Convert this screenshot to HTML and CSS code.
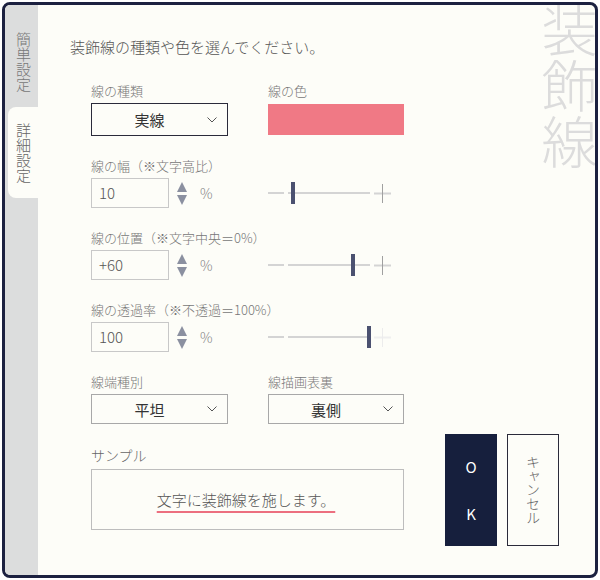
FILE: index.html
```html
<!DOCTYPE html>
<html lang="ja">
<head>
<meta charset="utf-8">
<title>装飾線</title>
<link rel="stylesheet" href="styles.css">
</head>
<body>
<div class="frame">
  <nav class="tabs">
    <div class="tab">簡単設定</div>
    <div class="tab active">詳細設定</div>
  </nav>
  <main class="panel">
    <div class="watermark">装飾線</div>
    <p class="lead">装飾線の種類や色を選んでください。</p>
    <div class="bottom">
      <div class="form">
        <div class="grid2">
          <div class="field">
            <div class="label">線の種類</div>
            <div class="select focus"><span class="val">実線</span><svg class="chev" width="10" height="6" viewBox="0 0 10 6"><polyline points="0.5,0.5 5,5 9.5,0.5" fill="none" stroke="#555" stroke-width="1"/></svg></div>
          </div>
          <div class="field">
            <div class="label">線の色</div>
            <div class="swatch"></div>
          </div>
        </div>

        <div class="field">
          <div class="label">線の幅（※文字高比）</div>
          <div class="grid2 mid">
            <div class="num">
              <div class="input">10</div>
              <svg class="spin" width="10" height="23" viewBox="0 0 10 23"><polygon points="5,0 10,10 0,10" fill="#8b90a0"/><polygon points="0,13 10,13 5,23" fill="#8b90a0"/></svg>
              <span class="unit">%</span>
            </div>
            <div class="slider">
              <span class="minus"></span>
              <span class="track"><span class="thumb" style="left:3px"></span></span>
              <svg class="plus" width="17" height="19" viewBox="0 0 17 19"><line x1="0" y1="9.5" x2="17" y2="9.5" stroke="#d4d4d4" stroke-width="2"/><line x1="8.5" y1="0" x2="8.5" y2="19" stroke="#a0a0a0" stroke-width="1"/></svg>
            </div>
          </div>
        </div>

        <div class="field">
          <div class="label">線の位置（※文字中央＝0%）</div>
          <div class="grid2 mid">
            <div class="num">
              <div class="input">+60</div>
              <svg class="spin" width="10" height="23" viewBox="0 0 10 23"><polygon points="5,0 10,10 0,10" fill="#8b90a0"/><polygon points="0,13 10,13 5,23" fill="#8b90a0"/></svg>
              <span class="unit">%</span>
            </div>
            <div class="slider">
              <span class="minus"></span>
              <span class="track"><span class="thumb" style="left:63px"></span></span>
              <svg class="plus" width="17" height="19" viewBox="0 0 17 19"><line x1="0" y1="9.5" x2="17" y2="9.5" stroke="#d4d4d4" stroke-width="2"/><line x1="8.5" y1="0" x2="8.5" y2="19" stroke="#a0a0a0" stroke-width="1"/></svg>
            </div>
          </div>
        </div>

        <div class="field">
          <div class="label">線の透過率（※不透過＝100%）</div>
          <div class="grid2 mid">
            <div class="num">
              <div class="input">100</div>
              <svg class="spin" width="10" height="23" viewBox="0 0 10 23"><polygon points="5,0 10,10 0,10" fill="#8b90a0"/><polygon points="0,13 10,13 5,23" fill="#8b90a0"/></svg>
              <span class="unit">%</span>
            </div>
            <div class="slider">
              <span class="minus"></span>
              <span class="track"><span class="thumb" style="left:79px"></span></span>
              <svg class="plus" width="17" height="19" viewBox="0 0 17 19"><line x1="0" y1="9.5" x2="17" y2="9.5" stroke="#efefef" stroke-width="2"/><line x1="8.5" y1="0" x2="8.5" y2="19" stroke="#ececec" stroke-width="1"/></svg>
            </div>
          </div>
        </div>

        <div class="grid2">
          <div class="field">
            <div class="label">線端種別</div>
            <div class="select"><span class="val">平坦</span><svg class="chev" width="10" height="6" viewBox="0 0 10 6"><polyline points="0.5,0.5 5,5 9.5,0.5" fill="none" stroke="#555" stroke-width="1"/></svg></div>
          </div>
          <div class="field">
            <div class="label">線描画表裏</div>
            <div class="select"><span class="val">裏側</span><svg class="chev" width="10" height="6" viewBox="0 0 10 6"><polyline points="0.5,0.5 5,5 9.5,0.5" fill="none" stroke="#555" stroke-width="1"/></svg></div>
          </div>
        </div>

        <div class="field">
          <div class="label sample-label">サンプル</div>
          <div class="sample"><span class="sample-text">文字に装飾線を施します。</span></div>
        </div>
      </div>

      <div class="buttons">
        <button class="btn ok"><span>O</span><span>K</span></button>
        <button class="btn cancel"><span class="vtext">キャンセル</span></button>
      </div>
    </div>
  </main>
</div>
</body>
</html>
```

FILE: styles.css
```css
* { box-sizing: border-box; }

html, body {
  margin: 0;
  padding: 0;
  background: #ffffff;
  font-family: "Noto Sans CJK JP", "Noto Sans", sans-serif;
  font-weight: 300;
}

.frame {
  margin: 2px;
  width: 596px;
  height: 576px;
  border: 3px solid #1c2140;
  border-radius: 8px;
  display: flex;
  overflow: hidden;
  background: #fdfdf8;
}

.tabs {
  width: 33px;
  flex: none;
  background: #dcdddd;
  padding-top: 16px;
  display: flex;
  flex-direction: column;
  gap: 4px;
}

.tab {
  margin-left: 3px;
  writing-mode: vertical-rl;
  font-size: 15px;
  line-height: 30px;
  color: #777;
  padding: 11px 0 11px;
  border-radius: 8px 0 0 8px;
  text-align: left;
}

.tab.active {
  background: #fdfdf8;
  padding: 16px 0 15px;
  color: #666;
}

.panel {
  flex: 1;
  position: relative;
  padding: 32px 0 30px 32px;
  display: flex;
  flex-direction: column;
}

.watermark {
  position: absolute;
  top: -3px;
  right: -2px;
  writing-mode: vertical-rl;
  font-size: 56px;
  line-height: 56px;
  color: #dcdcdc;
  font-weight: 300;
}

.lead {
  margin: 0;
  font-size: 15px;
  line-height: 20px;
  color: #555;
  position: relative;
}

.bottom {
  margin-top: 25px;
  display: flex;
  align-items: flex-end;
}

.form {
  margin-left: 21px;
  width: 313px;
  display: flex;
  flex-direction: column;
  gap: 21px;
  margin-bottom: 16px;
}

.grid2 {
  display: grid;
  grid-template-columns: 137px 136px;
  column-gap: 40px;
}

.grid2.mid {
  align-items: center;
}

.field {
  display: flex;
  flex-direction: column;
}

.label {
  font-size: 13px;
  line-height: 18px;
  color: #777;
  margin-bottom: 3px;
  white-space: nowrap;
}

.sample-label {
  font-size: 14px;
  line-height: 20px;
  margin-bottom: 4px;
  color: #666;
}

.select {
  height: 30px;
  border: 1px solid #a8a8a8;
  background: #fdfdf8;
  display: flex;
  align-items: center;
  padding-right: 10px;
}

.select.focus {
  height: 33px;
  border-color: #2a2a3a;
}

.select .val {
  flex: 1;
  text-align: center;
  font-size: 15px;
  color: #333;
  font-weight: 400;
}

.chev {
  flex: none;
  display: block;
}

.swatch {
  height: 31px;
  margin-top: 1px;
  background: #f07985;
}

.num {
  display: flex;
  align-items: center;
}

.input {
  width: 78px;
  height: 30px;
  border: 1px solid #c8c8c8;
  background: #fdfdf8;
  font-size: 15px;
  line-height: 28px;
  padding-left: 7px;
  color: #555;
}

.spin {
  margin-left: 8px;
  display: block;
  flex: none;
}

.unit {
  margin-left: 13px;
  font-size: 14px;
  color: #888;
}

.slider {
  display: flex;
  align-items: center;
  gap: 4px;
  height: 30px;
}

.minus {
  width: 16px;
  height: 2px;
  background: #d4d4d4;
}

.track {
  width: 82px;
  height: 2px;
  background: #d4d4d4;
  position: relative;
}

.thumb {
  position: absolute;
  top: -10px;
  width: 4px;
  height: 22px;
  background: #4b5170;
}

.plus {
  display: block;
  flex: none;
}

.sample {
  height: 61px;
  border: 1px solid #bdbdbd;
  display: flex;
  align-items: center;
  justify-content: center;
  padding-right: 3px;
}

.sample-text {
  font-size: 15px;
  color: #555;
  text-decoration: underline;
  text-decoration-color: #ec6f7f;
  text-decoration-thickness: 1.5px;
  text-underline-offset: 5px;
}

.buttons {
  margin-left: 41px;
  display: flex;
  gap: 10px;
}

.btn {
  width: 52px;
  height: 112px;
  padding: 0;
  margin: 0;
  font-family: inherit;
  font-weight: 300;
  border-radius: 0;
  display: flex;
  flex-direction: column;
  align-items: center;
  justify-content: center;
}

.ok {
  background: #161f3d;
  border: 1px solid #161f3d;
  color: #fff;
  font-size: 15px;
  line-height: 20px;
  gap: 27px;
  font-weight: 400;
}

.cancel {
  background: #fdfdf8;
  border: 1px solid #2a2a3a;
  color: #666;
}

.vtext {
  writing-mode: vertical-rl;
  font-size: 14px;
  line-height: 20px;
}
```
